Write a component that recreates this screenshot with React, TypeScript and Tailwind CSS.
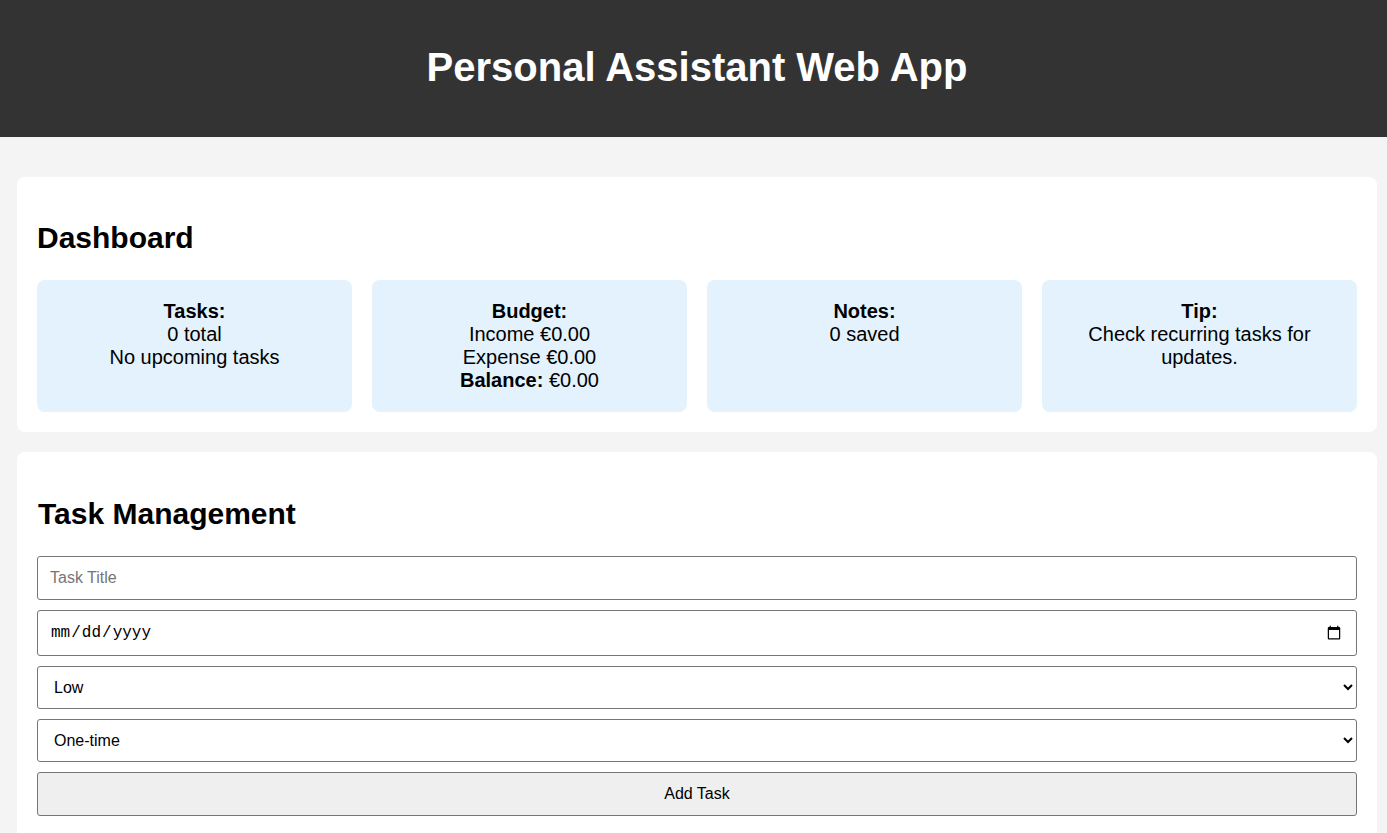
import { useState } from 'react';

const cards = [
  { title: 'Tasks:', lines: ['0 total', 'No upcoming tasks'] },
  { title: 'Budget:', lines: ['Income €0.00', 'Expense €0.00'], balance: '€0.00' },
  { title: 'Notes:', lines: ['0 saved'] },
  { title: 'Tip:', lines: ['Check recurring tasks for updates.'] },
];

export default function App() {
  const [title, setTitle] = useState('');
  const [priority, setPriority] = useState('Low');
  const [recurrence, setRecurrence] = useState('One-time');

  return (
    <div className="min-h-screen bg-[#f4f4f4] text-black font-['Liberation_Sans',Arial,sans-serif]">
      <header className="h-[137px] bg-[#333333] flex items-center justify-center pb-[3px] pl-[7px]">
        <h1 className="text-[40px] font-bold text-white leading-[46px]">Personal Assistant Web App</h1>
      </header>

      <section className="mt-10 ml-[17px] mr-[10px] bg-white rounded-lg px-5 pt-[44px] pb-[20px]">
        <h2 className="text-[30px] font-bold leading-[34px] mb-[25px]">Dashboard</h2>
        <div className="grid grid-cols-4 gap-5">
          {cards.map((c) => (
            <div key={c.title} className="bg-[#e3f2fd] rounded-lg p-5 text-center text-[20px] leading-[23px]">
              <div className="font-bold">{c.title}</div>
              {c.lines.map((l) => (
                <div key={l}>{l}</div>
              ))}
              {c.balance && (
                <div>
                  <span className="font-bold">Balance:</span> {c.balance}
                </div>
              )}
            </div>
          ))}
        </div>
      </section>

      <section className="mt-5 ml-[17px] mr-[10px] bg-white rounded-lg px-5 pt-[45px] pb-5">
        <h2 className="text-[30px] font-bold leading-[34px] mb-[25px] ml-px">Task Management</h2>
        <div className="flex flex-col gap-[10px] text-base">
          <input
            value={title}
            onChange={(e) => setTitle(e.target.value)}
            placeholder="Task Title"
            className="h-[44px] w-full border border-[#767676] rounded-[3px] px-3 bg-white placeholder-[#757575] outline-none"
          />
          <input
            type="date"
            className="h-[46px] w-full border border-[#767676] rounded-[3px] px-3 bg-white font-['Liberation_Mono',monospace] text-base outline-none"
          />
          <select
            value={priority}
            onChange={(e) => setPriority(e.target.value)}
            className="h-[43px] w-full border border-[#767676] rounded-[3px] px-3 bg-white outline-none"
          >
            <option>Low</option>
            <option>Medium</option>
            <option>High</option>
          </select>
          <select
            value={recurrence}
            onChange={(e) => setRecurrence(e.target.value)}
            className="h-[43px] w-full border border-[#767676] rounded-[3px] px-3 bg-white outline-none"
          >
            <option>One-time</option>
            <option>Daily</option>
            <option>Weekly</option>
            <option>Monthly</option>
          </select>
          <button className="h-[44px] w-full border border-[#767676] rounded-[3px] bg-[#efefef] text-base">
            Add Task
          </button>
        </div>
        <ul className="mt-5 h-10"></ul>
      </section>
    </div>
  );
}
